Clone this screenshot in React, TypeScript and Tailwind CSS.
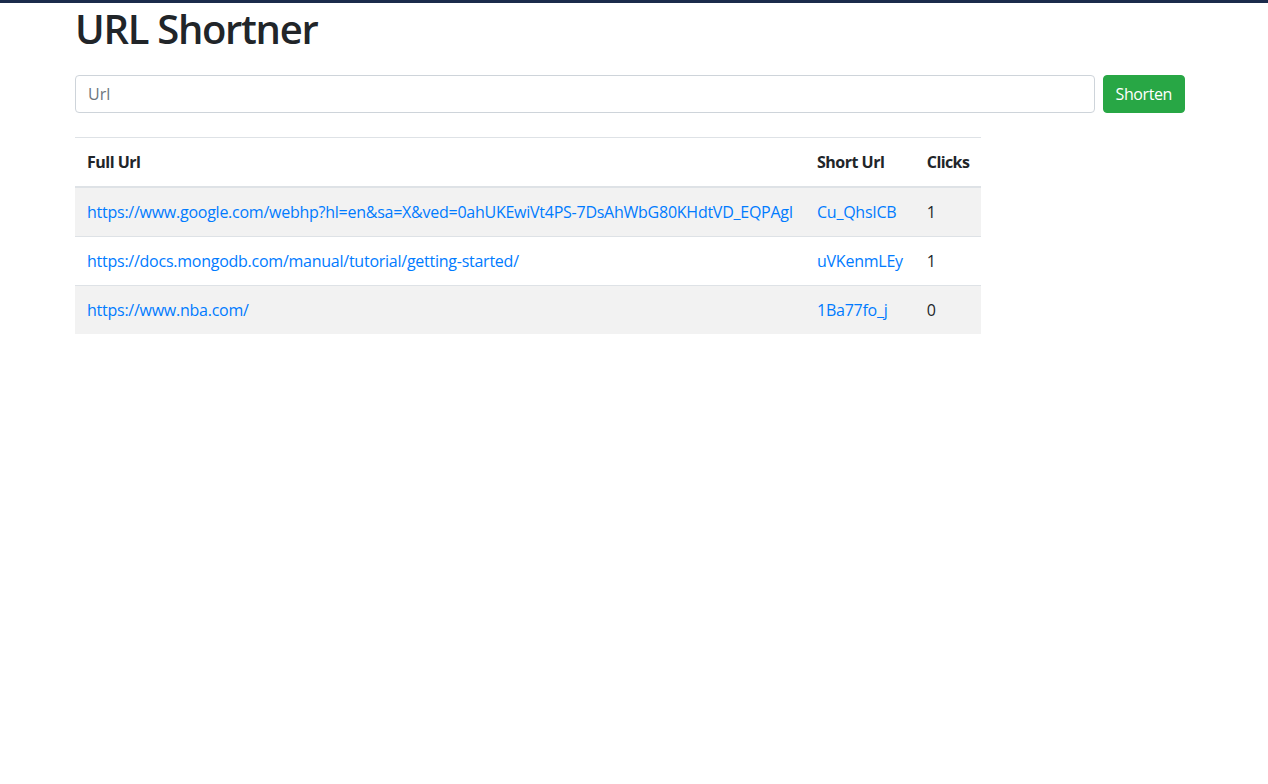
import React from "react";

type Row = {
  full: string;
  short: string;
  clicks: number;
};

const rows: Row[] = [
  {
    full: "https://www.google.com/webhp?hl=en&sa=X&ved=0ahUKEwiVt4PS-7DsAhWbG80KHdtVD_EQPAgI",
    short: "Cu_QhsICB",
    clicks: 1,
  },
  {
    full: "https://docs.mongodb.com/manual/tutorial/getting-started/",
    short: "uVKenmLEy",
    clicks: 1,
  },
  { full: "https://www.nba.com/", short: "1Ba77fo_j", clicks: 0 },
];

const App = () => {
  return (
    <div className="min-h-[784px] bg-white text-[#212529] font-['Open_Sans',sans-serif]">
      <div className="h-[3px] bg-[#1b2b4b]" />
      <div className="ml-[75px] w-[1110px]">
        <h1 className="text-[40px] leading-[48px] font-semibold tracking-[-1.3px] pt-[2px] mb-2">
          URL Shortner
        </h1>
        <form className="flex gap-2 mt-[22px] mb-6" onSubmit={(e) => e.preventDefault()}>
          <input
            type="text"
            placeholder="Url"
            className="flex-1 h-[38px] px-3 border border-[#ced4da] rounded text-base placeholder:text-[#6c757d] outline-none"
          />
          <button
            type="submit"
            className="h-[38px] px-[12px] rounded bg-[#28a745] text-white text-base tracking-[-0.4px] border border-[#28a745]"
          >
            Shorten
          </button>
        </form>
        <table className="border-collapse text-base tracking-[-0.25px]">
          <thead>
            <tr className="border-t border-[#dee2e6]">
              <th className="text-left font-bold p-3 h-[49px] border-b-2 border-[#dee2e6] tracking-[-0.5px]">Full Url</th>
              <th className="text-left font-bold p-3 border-b-2 border-[#dee2e6] tracking-[-0.5px]">Short Url</th>
              <th className="text-left font-bold p-3 border-b-2 border-[#dee2e6] tracking-[-0.6px]">Clicks</th>
            </tr>
          </thead>
          <tbody>
            {rows.map((r, i) => (
              <tr
                key={i}
                className={
                  (i % 2 === 0 ? "bg-[#f2f2f2] " : "bg-white ") +
                  (i > 0 ? "border-t border-[#dee2e6]" : "")
                }
              >
                <td className="p-3 h-[48px]">
                  <a href="#" className="text-[#007bff]">{r.full}</a>
                </td>
                <td className="p-3">
                  <a href="#" className="text-[#007bff]">{r.short}</a>
                </td>
                <td className="p-3">{r.clicks}</td>
              </tr>
            ))}
          </tbody>
        </table>
      </div>
    </div>
  );
};

export default App;
